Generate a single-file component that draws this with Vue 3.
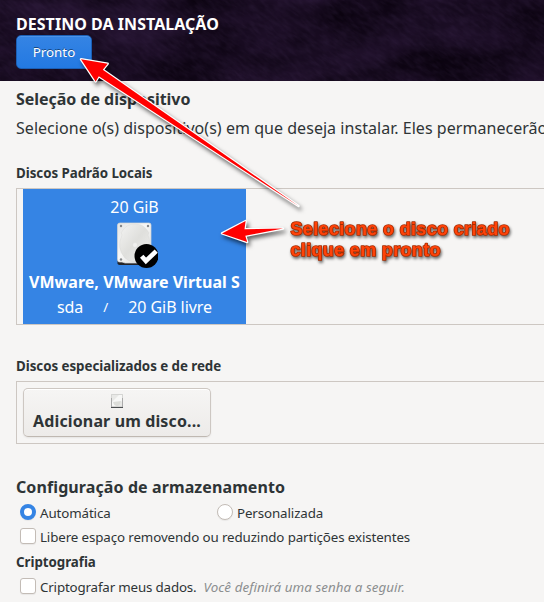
<script setup>
import { ref } from 'vue'

const mode = ref('auto')
const reclaim = ref(false)
const encrypt = ref(false)
</script>

<template>
  <div class="screen">
    <header class="header">
      <svg class="texture" width="544" height="81" aria-hidden="true">
        <defs>
          <filter id="clouds" x="0" y="0" width="100%" height="100%" color-interpolation-filters="sRGB">
            <feTurbulence type="fractalNoise" baseFrequency="0.012 0.022" numOctaves="5" seed="8" />
            <feColorMatrix values="0.17 0 0 0 0.01  0.11 0 0 0 -0.01  0.22 0 0 0 0.02  0 0 0 0 1" />
          </filter>
          <filter id="grain" x="0" y="0" width="100%" height="100%" color-interpolation-filters="sRGB">
            <feTurbulence type="fractalNoise" baseFrequency="0.09 0.3" numOctaves="3" seed="3" />
            <feColorMatrix values="0 0 0 0 0.3  0 0 0 0 0.22  0 0 0 0 0.38  0.35 0 0 0 -0.13" />
          </filter>
        </defs>
        <rect width="544" height="81" filter="url(#clouds)" />
        <g transform="rotate(35 272 40)"><rect x="-60" y="-300" width="664" height="680" filter="url(#grain)" /></g>
      </svg>
      <h1 class="title"><span>DESTINO DA INSTALAÇÃO</span></h1>
      <button class="done">Pronto</button>
    </header>

    <main class="body">
      <h2 class="heading">Seleção de dispositivo</h2>
      <p class="intro">Selecione o(s) dispositivo(s) em que deseja instalar. Eles permanecerão</p>

      <h3 class="sub local">Discos Padrão Locais</h3>
      <section class="frame">
        <div class="disk">
          <div class="line">20 GiB</div>
          <svg class="drive" width="48" height="48" viewBox="0 0 48 48">
            <defs>
              <linearGradient id="metal" x1="0" y1="0" x2="1" y2="1">
                <stop offset="0" stop-color="#e6e6e5" /><stop offset=".45" stop-color="#f7f7f6" /><stop offset="1" stop-color="#d5d5d3" />
              </linearGradient>
              <linearGradient id="platter" x1="0" y1="0" x2="1" y2="1">
                <stop offset="0" stop-color="#f4f4f3" /><stop offset=".5" stop-color="#dfdfdc" /><stop offset="1" stop-color="#efefed" />
              </linearGradient>
            </defs>
            <path d="M7.5 39h33v4.2q0 1.8-2 1.8h-29q-2 0-2-1.8z" fill="#242428" />
            <path d="M10 3h29q2 0 2 2v34l-3 4H15l-3-1H9.5q-2 0-2-2V5q0-2 2.500-2z" fill="url(#metal)" stroke="#d5d6d4" stroke-width=".7" />
            <path d="M12 15q-2-2 1-5 4-6 12-6t12 6q3 3 1 5 2 4 1 9-2 12-9 16-8 4-15-2Q6 28 12 15z" fill="url(#platter)" stroke="#d6d7d3" stroke-width=".4" />
            <circle cx="25" cy="25" r="2.4" fill="#f0f0ef" stroke="#d8d8d6" stroke-width=".4" />
            <g fill="#85878a"><circle cx="11" cy="6" r="1.2" /><circle cx="38" cy="6" r="1.2" /><circle cx="11" cy="39.5" r="1.2" /></g>
            <circle cx="36.500" cy="36" r="12" fill="#000" />
            <path d="M31.700 36.200l4.200 4.700 10.300-9.700" fill="none" stroke="#fff" stroke-width="4.6" />
          </svg>
          <div class="line model">VMware, VMware Virtual S</div>
          <div class="line details"><span>sda</span><small>/</small><span>20 GiB livre</span></div>
        </div>
      </section>

      <h3 class="sub network">Discos especializados e de rede</h3>
      <section class="frame network-frame">
        <button class="add">
          <svg width="12" height="14" viewBox="0 0 12 14">
            <rect x=".5" y=".5" width="11" height="12" fill="#e8e8e6" stroke="#bcbcba" stroke-dasharray="1 1" />
            <path d="M1 8l7-7h3v6l-6 5H1z" fill="#f7f7f6" />
            <path d="M2 8q1 4 4 4t4-5" fill="#dcddd9" />
            <path d="M.5 4v9M11.5 4v9" stroke="#aaa" />
            <path d="M0 13.5h12" stroke="#4b4e50" />
          </svg>
          <span>Adicionar um disco...</span>
        </button>
      </section>

      <h2 class="heading config">Configuração de armazenamento</h2>
      <div class="row radios">
        <label class="option auto"><input v-model="mode" type="radio" value="auto" /><span>Automática</span></label>
        <label class="option"><input v-model="mode" type="radio" value="custom" /><span>Personalizada</span></label>
      </div>
      <div class="row space">
        <label class="option"><input v-model="reclaim" type="checkbox" /><span>Libere espaço removendo ou reduzindo partições existentes</span></label>
      </div>
      <h3 class="sub crypto">Criptografia</h3>
      <div class="row crypt-row">
        <label class="option"><input v-model="encrypt" type="checkbox" /><span>Criptografar meus dados.</span></label>
        <em>Você definirá uma senha a seguir.</em>
      </div>
    </main>

    <svg class="notes" width="544" height="602" viewBox="0 0 544 602">
      <g class="arrows">
        <path d="M81 59.3L107.7 63.7L102.8 69.8L298.5 206L98.8 76.2L95.7 81.5Z" />
        <path d="M222 233.4L245.6 221L244.5 229.3L283 228.6L245.3 235.8L247.2 242Z" />
      </g>
      <g class="callout">
        <text x="290.5" y="235" textLength="219">Selecione o disco criado</text>
        <text x="290.5" y="256" textLength="150">clique em pronto</text>
      </g>
    </svg>
  </div>
</template>

<style>
body { margin: 0; overflow: hidden; }
</style>

<style scoped>
.screen {
  position: relative;
  width: 544px;
  height: 602px;
  overflow: hidden;
  background: #f6f5f4;
  color: #2e3436;
  font-family: "Noto Sans", sans-serif;
  font-size: 13.33px;
}
h1, h2, h3, p { margin: 0; white-space: nowrap; }
button { font-family: inherit; box-sizing: border-box; }
.header {
  position: relative;
  box-sizing: border-box;
  height: 81px;
  padding: 13px 16px 0;
  background: #150b20;
}
.texture { position: absolute; left: 0; top: 0; }
.title { position: relative; font-size: 16px; line-height: 22px; letter-spacing: .04px; color: #fff; }
.done {
  position: relative;
  display: block;
  width: 76px;
  height: 34px;
  padding: 0;
  border: 1px solid #1b5fb5;
  border-radius: 5px;
  background: linear-gradient(#3584e4, #2379e2);
  box-shadow: inset 0 1px rgba(255, 255, 255, .12);
  color: #fff;
  font-size: 13.33px;
  line-height: 32px;
  text-shadow: 0 -1px rgba(0, 0, 0, .45);
}
.body { padding: 6px 0 0 16px; }
.heading { font-size: 16px; line-height: 24px; letter-spacing: -.04px; }
.intro { margin-top: 5px; font-size: 16px; line-height: 24px; letter-spacing: .04px; }
.sub { font-size: 13.33px; line-height: 20px; letter-spacing: -.04px; }
.local { margin-top: 23px; }
.frame {
  box-sizing: border-box;
  height: 137px;
  margin-top: 5px;
  padding-left: 6px;
  border: 1px solid #cdc7c2;
  border-right: 0;
}
.disk {
  display: flex;
  flex-direction: column;
  align-items: center;
  box-sizing: border-box;
  width: 223px;
  height: 135px;
  padding-top: 7px;
  background: #3584e4;
  color: #fff;
}
.line { font-size: 16px; line-height: 22px; letter-spacing: -.05px; white-space: nowrap; }
.drive { margin: 2px 2px 3px 0; }
.model { font-weight: 700; letter-spacing: .03px; }
.details { display: flex; gap: 20px; margin-top: 3px; }
.details small { font-size: 13.33px; }
.network { margin-top: 31px; }
.network-frame { height: 63px; padding-top: 6px; }
.add {
  display: flex;
  flex-direction: column;
  align-items: center;
  width: 188px;
  height: 49px;
  padding: 5px 0 0;
  border: 1px solid #cdc7c2;
  border-bottom-color: #bfb8b1;
  border-radius: 5px;
  background: linear-gradient(#f6f5f4, #edebe9);
  box-shadow: inset 0 1px #fff, 0 1px 2px rgba(0, 0, 0, .07);
  color: #2e3436;
  font-size: 16px;
  font-weight: 700;
  line-height: 22px;
}
.add span { margin-top: 2px; letter-spacing: .13px; }
.config { margin-top: 31px; letter-spacing: .1px; }
.row { display: flex; height: 20px; line-height: 20px; white-space: nowrap; }
.radios { margin-top: 4px; }
.space { margin-top: 4px; }
.crypto { margin-top: 5px; }
.crypt-row { margin-top: 5px; }
.option { display: flex; padding-left: 4px; gap: 4px; letter-spacing: -.11px; }
.auto { width: 193px; }
.crypt-row .option { letter-spacing: -.16px; }
.option input {
  appearance: none;
  box-sizing: border-box;
  width: 16px;
  height: 16px;
  margin: 1px 0 0;
  border: 1px solid #c3bcb6;
  border-radius: 3px;
  background: #fff;
  box-shadow: 0 1px 1px rgba(0, 0, 0, .06);
}
.option input[type="radio"] { border-radius: 50%; }
.option input[type="radio"]:checked { border: 4px solid #3584e4; }
em { margin-left: 7px; color: #8b8e8f; letter-spacing: .08px; }
.notes { position: absolute; left: 0; top: 0; pointer-events: none; }
.arrows { filter: drop-shadow(2px 3px 2px rgba(0, 0, 0, .6)); }
.arrows path { fill: #f00; stroke: #fff; stroke-width: 2.4; stroke-linejoin: round; paint-order: stroke; }
.callout {
  font-family: "Liberation Sans", sans-serif;
  font-size: 18px;
  font-weight: 700;
  fill: #ff4208;
  stroke: #a62c00;
  stroke-width: 1.7;
  stroke-linejoin: round;
  paint-order: stroke;
  filter: drop-shadow(1px 2px 1.5px rgba(0, 0, 0, .6));
}
</style>
